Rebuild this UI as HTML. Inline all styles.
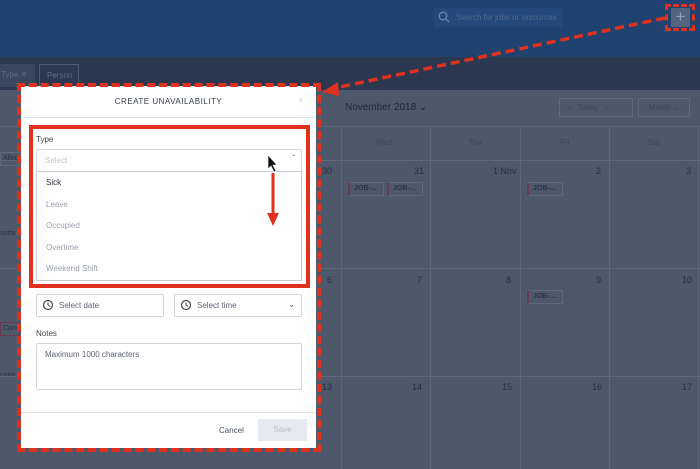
<!DOCTYPE html>
<html><head><style>
*{box-sizing:border-box;margin:0;padding:0}
body{width:700px;height:469px;overflow:hidden;position:relative;background:#4e586b;font-family:"Liberation Sans",sans-serif;font-size:9px;color:#333}
.a{position:absolute;white-space:nowrap}
.hd{left:0;top:0;width:700px;height:57px;background:#1f4270}
.bar{left:0;top:57px;width:700px;height:33px;background:#2b3850}
.vl{position:absolute;width:1px;background:#5d6779}
.hl{position:absolute;height:1px;background:#5d6779}
.num{position:absolute;color:#25303f;font-size:9px;white-space:nowrap}
.job{position:absolute;height:14px;width:36px;border:1px solid #5f697a;border-left:2px solid #6a3850;color:#2a3344;font-size:7px;padding:2px 4px;font-weight:bold;white-space:nowrap}
.m{left:21px;top:86px;width:295px;height:362px;background:#fff}
.inp{position:absolute;border:1px solid #d2d6dc;border-radius:2px;background:#fff;color:#5c6370;font-size:8px;white-space:nowrap}
.opt{position:absolute;left:46px;font-size:8px;color:#9aa0a8}
</style></head><body>
<div class="a hd"></div>
<div class="a" style="left:434px;top:8px;width:128px;height:19px;background:#25487a;color:#4f6a90;font-size:8px;padding:5px 0 0 22px">Search for jobs or resources</div>
<svg class="a" style="left:438px;top:11px" width="12" height="12"><circle cx="5" cy="5" r="3.8" fill="none" stroke="#6a84a8" stroke-width="1.3"/><line x1="8" y1="8" x2="11" y2="11" stroke="#6a84a8" stroke-width="1.3"/></svg>
<div class="a" style="left:671px;top:8px;width:19px;height:19px;background:#55647d;color:#8aa0c0;font-size:17px;line-height:18px;text-align:center">+</div>
<div class="a" style="left:665px;top:4px;width:30px;height:27px;border:3px dashed #e0301e"></div>
<div class="a bar"></div>
<div class="a" style="left:0;top:64px;width:35px;height:23px;background:#38465e;color:#5d6d87;font-size:8px;padding:6px 0 0 1px">Type ✕</div>
<div class="a" style="left:39px;top:64px;width:40px;height:23px;border:1px solid #4a5a74;color:#5d6d87;font-size:8px;padding:6px 0 0 7px">Person</div>
<!-- left stubs -->
<div class="a" style="left:0;top:152px;width:20px;height:14px;border:1px solid #5f697a;color:#2a3344;font-size:7px;padding:2px 0 0 2px;overflow:hidden">Alloc</div>
<div class="a" style="left:0;top:230px;color:#2a3344;font-size:7px">ustra</div>
<div class="a" style="left:0;top:322px;width:20px;height:14px;border:1px solid #6a3850;color:#2a3344;font-size:7px;padding:2px 0 0 2px;overflow:hidden">Canc</div>
<div class="a" style="left:0;top:372px;color:#2a3344;font-size:7px">ustra</div>
<!-- calendar -->
<div class="a" style="left:345px;top:102px;color:#1f2838;font-size:10px">November 2018 ⌄</div>
<div class="a" style="left:559px;top:98px;width:74px;height:19px;border:1px solid #5f697a;color:#3d4759;font-size:8px;padding:4px 0 0 8px">‹ &nbsp;&nbsp;Today &nbsp;&nbsp;›</div>
<div class="a" style="left:638px;top:98px;width:52px;height:19px;border:1px solid #5f697a;color:#3d4759;font-size:8px;padding:4px 0 0 10px">Month ⌄</div>
<div class="hl" style="left:0;top:126px;width:700px"></div>
<div class="hl" style="left:0;top:160px;width:700px"></div>
<div class="hl" style="left:0;top:268px;width:700px"></div>
<div class="hl" style="left:0;top:376px;width:700px"></div>
<div class="vl" style="left:341px;top:126px;height:343px"></div>
<div class="vl" style="left:430px;top:126px;height:343px"></div>
<div class="vl" style="left:520px;top:126px;height:343px"></div>
<div class="vl" style="left:609px;top:126px;height:343px"></div>
<div class="vl" style="left:698px;top:126px;height:343px"></div>
<div class="num" style="left:376px;top:138px;color:#3d4759;font-size:8px">Wed</div>
<div class="num" style="left:468px;top:138px;color:#3d4759;font-size:8px">Thu</div>
<div class="num" style="left:560px;top:138px;color:#3d4759;font-size:8px">Fri</div>
<div class="num" style="left:648px;top:138px;color:#3d4759;font-size:8px">Sat</div>
<div class="num" style="left:322px;top:166px">30</div><div class="num" style="left:414px;top:166px">31</div><div class="num" style="left:493px;top:166px">1 Nov</div><div class="num" style="left:596px;top:166px">2</div><div class="num" style="left:686px;top:166px">3</div>
<div class="num" style="left:327px;top:275px">6</div><div class="num" style="left:417px;top:275px">7</div><div class="num" style="left:506px;top:275px">8</div><div class="num" style="left:596px;top:275px">9</div><div class="num" style="left:682px;top:275px">10</div>
<div class="num" style="left:322px;top:382px">13</div><div class="num" style="left:412px;top:382px">14</div><div class="num" style="left:502px;top:382px">15</div><div class="num" style="left:592px;top:382px">16</div><div class="num" style="left:682px;top:382px">17</div>
<div class="job" style="left:348px;top:182px">JOB-...</div><div class="job" style="left:387px;top:182px">JOB-...</div><div class="job" style="left:527px;top:182px">JOB-...</div><div class="job" style="left:527px;top:290px">JOB-...</div>
<!-- modal -->
<div class="a m"></div>
<div class="a" style="left:21px;top:97px;width:295px;text-align:center;font-size:8px;letter-spacing:.5px;color:#333a46">CREATE UNAVAILABILITY</div>
<div class="a" style="left:298px;top:95px;color:#c8ccd2;font-size:9px">×</div>
<div class="hl" style="left:21px;top:117px;width:295px;background:#e2e5e9"></div>
<div class="a" style="left:36px;top:135px;font-size:8px;color:#444">Type</div>
<div class="inp" style="left:36px;top:149px;width:266px;height:23px;padding:6px 0 0 8px;color:#c0c4ca">Select<span style="position:absolute;right:6px;top:4px;color:#555">ˆ</span></div>
<div class="a" style="left:36px;top:171px;width:266px;height:110px;border:1px solid #c8ccd2;background:#fff"></div>
<div class="opt" style="top:178px;color:#2a2f38">Sick</div>
<div class="opt" style="top:200px">Leave</div>
<div class="opt" style="top:221px">Occupied</div>
<div class="opt" style="top:243px">Overtime</div>
<div class="opt" style="top:264px">Weekend Shift</div>
<svg class="a" style="left:266px;top:153px" width="16" height="75"><path d="M2 2 L2 16 L5 13 L8 19 L10 18 L7 12 L11 12 Z" fill="#111" stroke="#fff" stroke-width=".6"/><line x1="7" y1="20" x2="7" y2="62" stroke="#e0301e" stroke-width="3"/><path d="M1 60 L13 60 L7 73 Z" fill="#e0301e"/></svg>
<div class="inp" style="left:36px;top:294px;width:128px;height:23px;padding:6px 0 0 22px">Select date</div>
<div class="inp" style="left:174px;top:294px;width:128px;height:23px;padding:6px 0 0 22px">Select time<span style="position:absolute;right:6px;top:5px">⌄</span></div>
<svg class="a" style="left:42px;top:299px" width="12" height="12"><circle cx="6" cy="6" r="4.5" fill="none" stroke="#444" stroke-width="1.2"/><path d="M6 3.5V6L8 7.5" fill="none" stroke="#444" stroke-width="1"/></svg>
<svg class="a" style="left:180px;top:299px" width="12" height="12"><circle cx="6" cy="6" r="4.5" fill="none" stroke="#444" stroke-width="1.2"/><path d="M6 3.5V6L8 7.5" fill="none" stroke="#444" stroke-width="1"/></svg>
<div class="a" style="left:36px;top:329px;font-size:8px;color:#444">Notes</div>
<div class="inp" style="left:36px;top:343px;width:266px;height:47px;padding:6px 8px">Maximum 1000 characters</div>
<div class="hl" style="left:21px;top:412px;width:295px;background:#e2e5e9"></div>
<div class="a" style="left:219px;top:426px;font-size:8px;color:#4a515c">Cancel</div>
<div class="a" style="left:258px;top:419px;width:49px;height:22px;background:#e6eaf0;color:#b8c0cc;font-size:8px;text-align:center;padding-top:6px">Save</div>
<!-- red highlights -->
<div class="a" style="left:29px;top:125px;width:281px;height:163px;border:4px solid #e0301e"></div>
<div class="a" style="left:17px;top:83px;width:304px;height:369px;border:4px dashed #e0301e"></div>
<svg class="a" style="left:0;top:0" width="700" height="469"><line x1="665" y1="18" x2="335" y2="88" stroke="#e0301e" stroke-width="3.5" stroke-dasharray="9,5"/><path d="M322 92 L338 82 L339 96 Z" fill="#e0301e"/></svg>
</body></html>
